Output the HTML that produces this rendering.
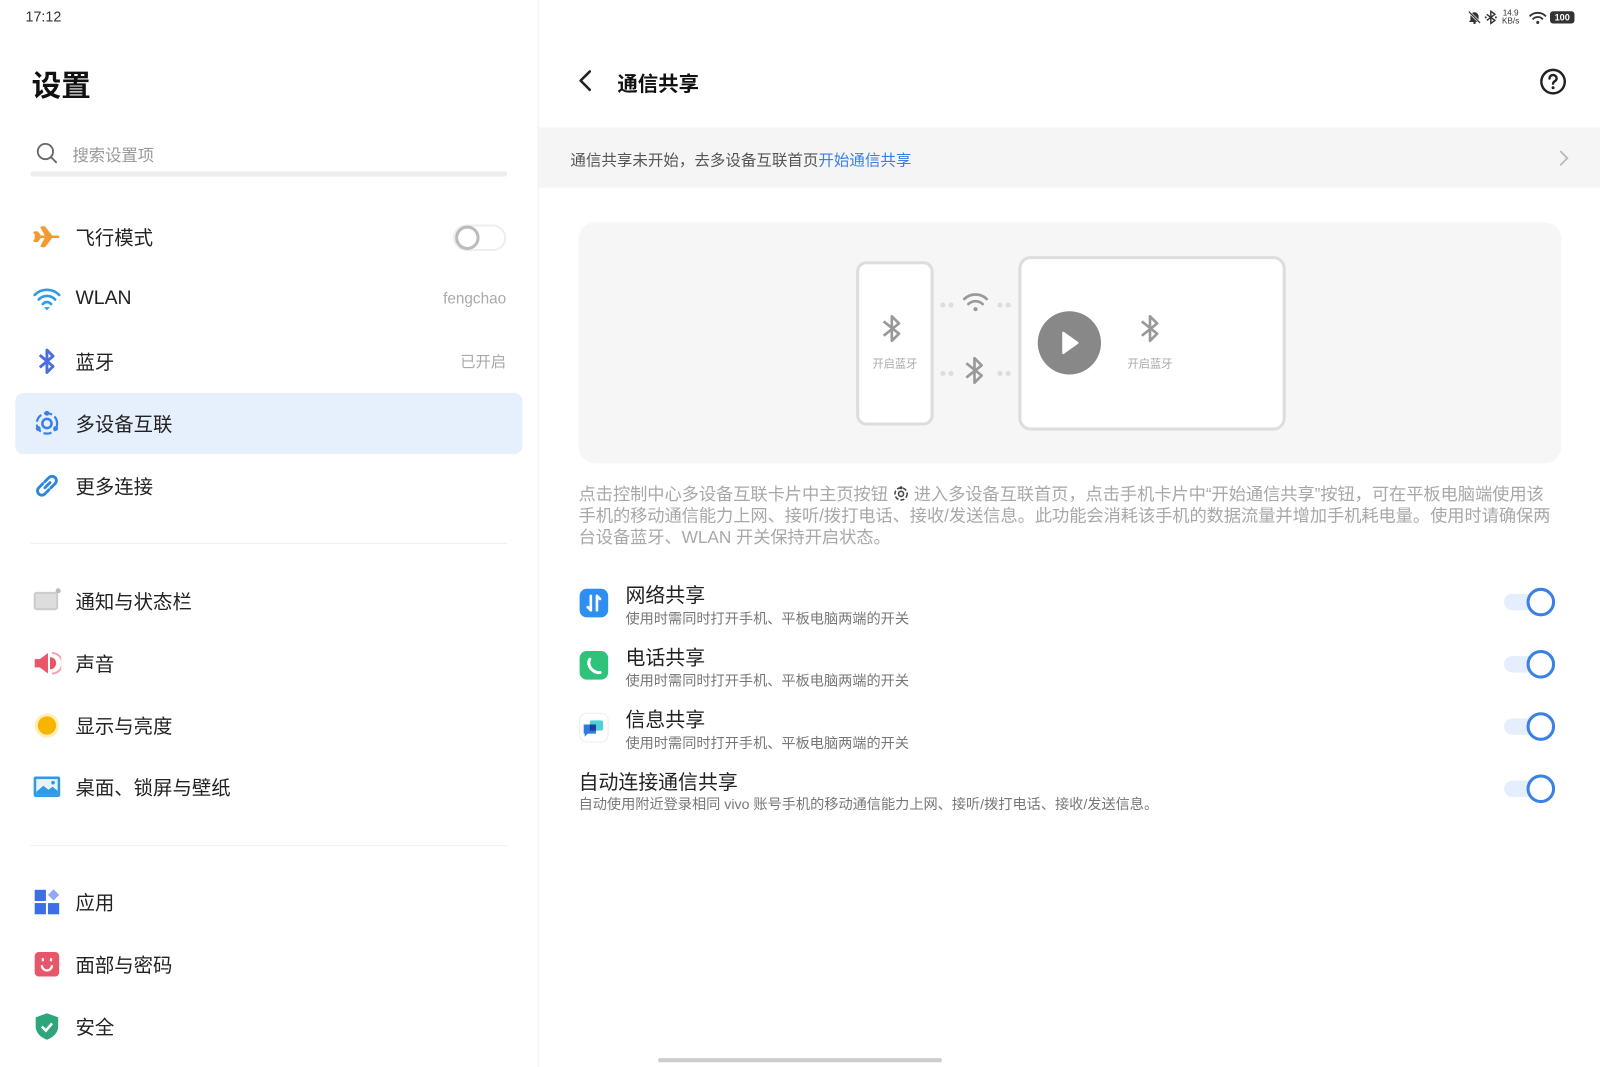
<!DOCTYPE html>
<html><head><meta charset="utf-8"><style>
*{margin:0;padding:0;box-sizing:border-box}
html,body{width:1600px;height:1067px;overflow:hidden;background:#fff}
#w{position:absolute;left:0;top:0;width:1568px;height:1046px;transform:scale(1.02041);transform-origin:0 0;font-family:"Liberation Sans","Noto Sans CJK SC",sans-serif;color:#222}
.a{position:absolute;white-space:nowrap}
.it{position:absolute;left:15px;width:497px;height:60px}
.it .t{position:absolute;left:59px;top:50%;transform:translateY(-50%);font-size:19px;color:#222}
.it .ic{position:absolute;left:17px;top:50%;transform:translateY(-50%);width:28px;height:28px}
.it .r{position:absolute;right:16px;top:50%;transform:translateY(-50%);font-size:15px;color:#aaa}
.hr{position:absolute;left:30px;width:467px;height:1px;background:#eee}
.sub{position:absolute;font-size:13.9px;color:#777}
.tt{font-size:19.5px}
.tg{position:absolute;left:1474px;width:52px;height:30px}
.tg:before{content:"";position:absolute;left:0;top:7px;width:40px;height:16px;border-radius:8px;background:#e4eefc}
.tg:after{content:"";position:absolute;left:22px;top:1px;width:28px;height:28px;border-radius:50%;border:3px solid #3b80e4;background:#fff;box-sizing:border-box}
.desc{position:absolute;left:567px;font-size:16.9px;line-height:20px;color:#a8a8a8;white-space:nowrap;letter-spacing:-0.05px}
</style></head><body><div id="w">
<div class="a" style="left:25px;top:8px;font-size:14px;color:#333">17:12</div>
<div class="a" style="left:31px;top:61px;font-size:29px;font-weight:bold;color:#111">设置</div>
<svg class="a" style="left:35px;top:139px" width="22" height="22" viewBox="0 0 22 22"><circle cx="9.5" cy="9.5" r="7.5" fill="none" stroke="#666" stroke-width="1.8"/><path d="M15 15l5 5" stroke="#666" stroke-width="1.8" stroke-linecap="round"/></svg>
<div class="a" style="left:71px;top:139px;font-size:16px;color:#999">搜索设置项</div>
<div class="a" style="left:30px;top:168px;width:467px;height:5px;background:#eee;border-radius:2px"></div>

<div class="it" style="top:202px"><svg class="ic" viewBox="0 0 28 28"><path d="M2 14h24M14 14l-5-9h2.5l7 9-7 9H9z M5 14l-3-4h2.5l3 4-3 4H2z" fill="#f39a33" stroke="#f39a33" stroke-width="2.5" stroke-linejoin="round"/></svg><div class="t">飞行模式</div>
<div style="position:absolute;right:16px;top:18px;width:52px;height:26px;border-radius:13px;border:2px solid #eee"><div style="position:absolute;left:0;top:-1px;width:24px;height:24px;border-radius:50%;border:3px solid #bbb;background:#fff"></div></div></div>
<div class="it" style="top:263px"><svg class="ic" viewBox="0 0 28 28"><path d="M2 10a17 17 0 0124 0M6 14.5a11 11 0 0116 0M10 19a5 5 0 018 0" fill="none" stroke="#2e9ae8" stroke-width="2.6" stroke-linecap="round"/><path d="M11 22h6l-3 3z" fill="#2e9ae8"/></svg><div class="t">WLAN</div><div class="r">fengchao</div></div>
<div class="it" style="top:324px"><svg class="ic" viewBox="0 0 28 28"><path d="M7 8l13 11-6 6V3l6 6L7 20" fill="none" stroke="#4a6de0" stroke-width="2.8" stroke-linejoin="round"/></svg><div class="t">蓝牙</div><div class="r">已开启</div></div>
<div class="it" style="top:385px;background:#e6effc;border-radius:8px"><svg class="ic" viewBox="0 0 28 28"><circle cx="14" cy="14" r="10" fill="none" stroke="#3b80e4" stroke-width="2.2" stroke-dasharray="8 3"/><circle cx="14" cy="14" r="4.5" fill="none" stroke="#3b80e4" stroke-width="2.5"/><circle cx="14" cy="4" r="2.4" fill="#3b80e4"/><circle cx="5.5" cy="19" r="2.4" fill="#3b80e4"/><circle cx="22.5" cy="19" r="2.4" fill="#3b80e4"/></svg><div class="t">多设备互联</div></div>
<div class="it" style="top:446px"><svg class="ic" viewBox="0 0 28 28"><path d="M12 16l5-5M10 12l-4 4a4 4 0 006 6l4-4M18 16l4-4a4 4 0 00-6-6l-4 4" fill="none" stroke="#2a86e0" stroke-width="2.8" stroke-linecap="round"/></svg><div class="t">更多连接</div></div>
<div class="hr" style="top:532px"></div>
<div class="it" style="top:559px"><svg class="ic" viewBox="0 0 28 28"><rect x="2" y="6" width="22" height="16" rx="2" fill="#ddd" stroke="#ccc" stroke-width="2"/><circle cx="25" cy="4" r="2.5" fill="#bbb"/></svg><div class="t">通知与状态栏</div></div>
<div class="it" style="top:620px"><svg class="ic" viewBox="0 0 28 28"><path d="M2 10h5l8-6v20l-8-6H2z" fill="#e8566a"/><path d="M17 8a6 6 0 010 12" fill="#e8566a"/><path d="M19 4a10 10 0 010 20" fill="none" stroke="#f2a6b0" stroke-width="2"/></svg><div class="t">声音</div></div>
<div class="it" style="top:681px"><svg class="ic" viewBox="0 0 28 28"><circle cx="14" cy="14" r="12" fill="#fcefb8"/><circle cx="14" cy="14" r="9" fill="#f9b400"/></svg><div class="t">显示与亮度</div></div>
<div class="it" style="top:741px"><svg class="ic" viewBox="0 0 28 28"><rect x="1" y="4" width="26" height="20" rx="2" fill="#2e9ae8"/><rect x="3.5" y="6.5" width="21" height="15" fill="#e8f3fd"/><path d="M3.5 19l7-6 5 4 4-3 5 4v3.5h-21z" fill="#2e9ae8"/><circle cx="20" cy="10" r="1.8" fill="#2e9ae8"/></svg><div class="t">桌面、锁屏与壁纸</div></div>
<div class="hr" style="top:828px"></div>
<div class="it" style="top:854px"><svg class="ic" viewBox="0 0 28 28"><rect x="2" y="2" width="11" height="11" fill="#3b6ee8"/><rect x="2" y="15" width="11" height="11" fill="#3b6ee8"/><rect x="15" y="15" width="11" height="11" fill="#3b6ee8"/><path d="M20.5 1.5l5.5 5.5-5.5 5.5-5.5-5.5z" fill="#8fa9f2"/></svg><div class="t">应用</div></div>
<div class="it" style="top:915px"><svg class="ic" viewBox="0 0 28 28"><rect x="2" y="2" width="24" height="24" rx="4" fill="#e8566a"/><path d="M9 15a5 5 0 0010 0" fill="none" stroke="#fff" stroke-width="2.2"/><path d="M10 8v3M18 8v3" stroke="#fff" stroke-width="2.2"/></svg><div class="t">面部与密码</div></div>
<div class="it" style="top:976px"><svg class="ic" viewBox="0 0 28 28"><path d="M14 1l11 4v9c0 7-6 11-11 13C9 25 3 21 3 14V5z" fill="#2ea57a"/><path d="M9 14l4 4 6-7" fill="none" stroke="#fff" stroke-width="2.5"/></svg><div class="t">安全</div></div>

<div class="a" style="left:527px;top:0;width:1px;height:1046px;background:#eee"></div>

<svg class="a" style="left:1438px;top:10px" width="14" height="14" viewBox="0 0 14 14"><path d="M3 10V6a4 4 0 018 0v4l1.5 1.5h-11z" fill="#333"/><circle cx="7" cy="12.5" r="1.2" fill="#333"/><path d="M1.5 1.5l11 11" stroke="#fff" stroke-width="2.5"/><path d="M1.5 1.5l11 11" stroke="#333" stroke-width="1.2"/></svg>
<svg class="a" style="left:1455px;top:10px" width="12" height="14" viewBox="0 0 12 14"><path d="M2 4l8 6-4 3V1l4 3-8 6" fill="none" stroke="#333" stroke-width="1.4"/><circle cx="1" cy="7" r="1" fill="#333"/><circle cx="11" cy="7" r="1" fill="#333"/></svg>
<div class="a" style="left:1472px;top:9px;font-size:8px;line-height:8px;color:#333;text-align:center">14.9<br>KB/s</div>
<svg class="a" style="left:1498px;top:11px" width="18" height="13" viewBox="0 0 18 13"><path d="M1 5a11 11 0 0116 0M4 8a6.5 6.5 0 0110 0" fill="none" stroke="#333" stroke-width="1.8"/><circle cx="9" cy="11" r="1.5" fill="#333"/></svg>
<div class="a" style="left:1519px;top:11px;width:24px;height:12px;background:#333;border-radius:3px;color:#fff;font-size:9px;font-weight:bold;text-align:center;line-height:12px">100</div>

<svg class="a" style="left:566px;top:68px" width="16" height="22" viewBox="0 0 16 22"><path d="M12 2L3 11l9 9" fill="none" stroke="#222" stroke-width="2.5" stroke-linecap="round" stroke-linejoin="round"/></svg>
<div class="a" style="left:605px;top:66px;font-size:20px;font-weight:bold;color:#111">通信共享</div>
<svg class="a" style="left:1508px;top:66px" width="28" height="28" viewBox="0 0 28 28"><circle cx="14" cy="14" r="11.5" fill="none" stroke="#222" stroke-width="2.4"/><path d="M10.5 11a3.5 3.5 0 117 0c0 2.5-3.5 2.5-3.5 5" fill="none" stroke="#222" stroke-width="2.4" stroke-linecap="round"/><circle cx="14" cy="20" r="1.5" fill="#222"/></svg>

<div class="a" style="left:528px;top:125px;width:1040px;height:59px;background:#f5f5f5"></div>
<div class="a" style="left:559px;top:145px;font-size:15.2px;color:#555">通信共享未开始，去多设备互联首页<span style="color:#3b80e4">开始通信共享</span></div>
<svg class="a" style="left:1526px;top:146px" width="12" height="18" viewBox="0 0 12 18"><path d="M3 2l7 7-7 7" fill="none" stroke="#bbb" stroke-width="1.8"/></svg>

<div class="a" style="left:567px;top:218px;width:963px;height:236px;background:#f6f6f6;border-radius:16px"></div>
<div class="a" style="left:839px;top:256px;width:76px;height:161px;border:3px solid #ddd;border-radius:10px;background:#fff"></div>
<div class="a" style="left:998px;top:251px;width:262px;height:171px;border:3px solid #ddd;border-radius:12px;background:#fff"></div>
<svg class="a" style="left:0;top:0" width="1568" height="460">
<g fill="none" stroke="#999" stroke-width="2.6" stroke-linejoin="round">
<path d="M866 315l15 12-7 7v-24l7 7-15 12"/>
<path d="M1119 315l15 12-7 7v-24l7 7-15 12"/>
<path d="M947 356l15 12-7 7v-24l7 7-15 12"/>
<path d="M945 293a16 16 0 0122 0M949 298a10 10 0 0114 0" stroke-linecap="round"/>
</g>
<circle cx="956" cy="303" r="2" fill="#999"/>
<g fill="#ddd"><circle cx="924" cy="299" r="2.5"/><circle cx="932" cy="299" r="2.5"/><circle cx="980" cy="299" r="2.5"/><circle cx="988" cy="299" r="2.5"/><circle cx="924" cy="366" r="2.5"/><circle cx="932" cy="366" r="2.5"/><circle cx="980" cy="366" r="2.5"/><circle cx="988" cy="366" r="2.5"/></g>
<circle cx="1048" cy="336" r="31" fill="#888"/>
<path d="M1042 326l14 10-14 10z" fill="#fff" stroke="#fff" stroke-width="2" stroke-linejoin="round"/>
<text x="877" y="360" font-size="11" fill="#aaa" text-anchor="middle" font-family="Liberation Sans,Noto Sans CJK SC,sans-serif">开启蓝牙</text>
<text x="1127" y="360" font-size="11" fill="#aaa" text-anchor="middle" font-family="Liberation Sans,Noto Sans CJK SC,sans-serif">开启蓝牙</text>
</svg>

<div class="desc" style="top:475px">点击控制中心多设备互联卡片中主页按钮 <svg width="16" height="16" viewBox="0 0 16 16" style="vertical-align:-2px"><circle cx="8" cy="8" r="6" fill="none" stroke="#444" stroke-width="1.5" stroke-dasharray="4 2"/><circle cx="8" cy="8" r="2.5" fill="none" stroke="#444" stroke-width="1.5"/><circle cx="8" cy="2" r="1.5" fill="#444"/></svg> 进入多设备互联首页，点击手机卡片中“开始通信共享”按钮，可在平板电脑端使用该</div>
<div class="desc" style="top:496px">手机的移动通信能力上网、接听/拨打电话、接收/发送信息。此功能会消耗该手机的数据流量并增加手机耗电量。使用时请确保两</div>
<div class="desc" style="top:517px">台设备蓝牙、WLAN 开关保持开启状态。</div>

<svg class="a" style="left:567px;top:576px" width="30" height="30" viewBox="0 0 30 30"><rect x="1" y="1" width="28" height="28" rx="7" fill="#2e8ff0"/><path d="M12 8v14M12 22l-3-3M18 22V8M18 8l3 3" fill="none" stroke="#fff" stroke-width="2.6" stroke-linecap="round"/></svg>
<div class="a tt" style="left:613px;top:567px">网络共享</div>
<div class="a sub" style="left:613px;top:596px">使用时需同时打开手机、平板电脑两端的开关</div>
<div class="tg" style="top:575px"></div>

<svg class="a" style="left:567px;top:637px" width="30" height="30" viewBox="0 0 30 30"><rect x="1" y="1" width="28" height="28" rx="7" fill="#2fc27a"/><path d="M11 9c-2 3-1 8 3 11s7 2 7 2" fill="none" stroke="#fff" stroke-width="3" stroke-linecap="round"/></svg>
<div class="a tt" style="left:613px;top:628px">电话共享</div>
<div class="a sub" style="left:613px;top:657px">使用时需同时打开手机、平板电脑两端的开关</div>
<div class="tg" style="top:636px"></div>

<svg class="a" style="left:567px;top:698px" width="30" height="30" viewBox="0 0 30 30"><rect x="1" y="1" width="28" height="28" rx="7" fill="#fff" stroke="#eee"/><rect x="11" y="8" width="13" height="10" rx="2" fill="#4fd0d8"/><path d="M5 12h12v9H9l-3 3v-3H5z" fill="#2e7be0"/><rect x="11" y="12" width="6" height="6" fill="#1a3e9a"/></svg>
<div class="a tt" style="left:613px;top:689px">信息共享</div>
<div class="a sub" style="left:613px;top:718px">使用时需同时打开手机、平板电脑两端的开关</div>
<div class="tg" style="top:697px"></div>

<div class="a tt" style="left:567px;top:750px">自动连接通信共享</div>
<div class="a sub" style="left:567px;top:778px">自动使用附近登录相同 vivo 账号手机的移动通信能力上网、接听/拨打电话、接收/发送信息。</div>
<div class="tg" style="top:758px"></div>

<div class="a" style="left:645px;top:1037px;width:278px;height:4px;border-radius:2px;background:#ccc"></div>
</div></body></html>
